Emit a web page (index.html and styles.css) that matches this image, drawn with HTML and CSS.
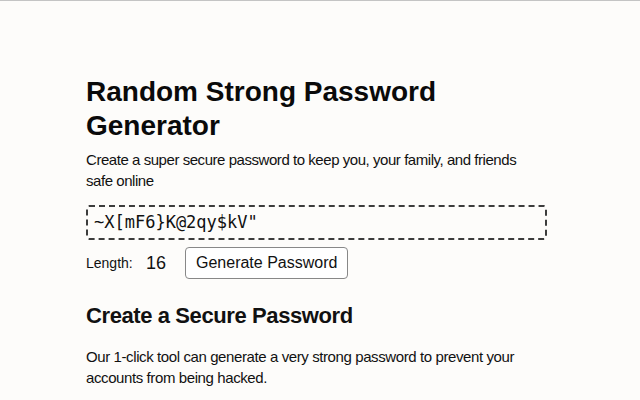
FILE: index.html
```html
<!DOCTYPE html>
<html>
<head>
<meta charset="utf-8">
<link rel="stylesheet" href="styles.css">
</head>
<body>
<main class="page">
  <h1 class="title">Random Strong Password Generator</h1>
  <p class="intro">Create a super secure password to keep you, your family, and friends safe online</p>
  <div class="output">~X[mF6}K@2qy$kV"</div>
  <div class="controls">
    <span class="label">Length:</span>
    <span class="length">16</span>
    <button class="generate">Generate Password</button>
  </div>
  <h2 class="subtitle">Create a Secure Password</h2>
  <p class="body">Our 1-click tool can generate a very strong password to prevent your accounts from being hacked.</p>
</main>
</body>
</html>
```
FILE: styles.css
```css
html, body {
  margin: 0;
  padding: 0;
  background: #fdfcfa;
}
body {
  border-top: 1px solid #c4c4c4;
  font-family: "Liberation Sans", Arial, sans-serif;
  color: #111;
}
.page {
  width: 461px;
  margin-left: 86px;
  padding-top: 74px;
}
.title {
  margin: 0;
  font-size: 28px;
  line-height: 34px;
  font-weight: bold;
  color: #0a0a0a;
}
.intro {
  margin: 6px 0 0;
  padding-right: 20px;
  font-size: 15px;
  line-height: 21px;
  letter-spacing: -0.45px;
}
.output {
  margin-top: 14px;
  height: 31px;
  border: 2px dashed #3c3c3c;
  border-radius: 3px;
  font-family: "DejaVu Sans Mono", monospace;
  font-size: 17px;
  line-height: 31px;
  padding-left: 6px;
  color: #111;
}
.controls {
  display: flex;
  align-items: center;
  margin-top: 7px;
  height: 32px;
}
.label {
  font-size: 14px;
  width: 60px;
}
.length {
  font-size: 18px;
  width: 39px;
}
.generate {
  font-family: "Liberation Sans", Arial, sans-serif;
  font-size: 16px;
  height: 32px;
  padding: 0 10px;
  background: #fff;
  border: 1px solid #888;
  border-radius: 4px;
  color: #111;
}
.subtitle {
  margin: 23px 0 0;
  font-size: 22px;
  line-height: 28px;
  font-weight: bold;
  letter-spacing: -0.4px;
}
.body {
  margin: 16px 0 0;
  font-size: 15px;
  line-height: 21px;
  letter-spacing: -0.4px;
}
```
